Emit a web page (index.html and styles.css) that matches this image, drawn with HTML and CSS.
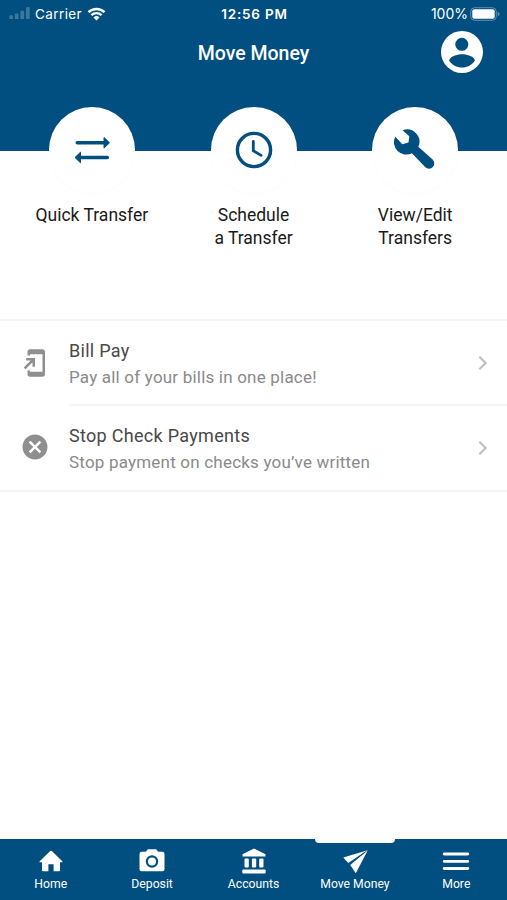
FILE: index.html
```html
<!DOCTYPE html>
<html lang="en">
<head>
    <meta charset="UTF-8">
    <meta name="viewport" content="width=device-width, initial-scale=1.0">
    <title>Move Money</title>

    <link rel="stylesheet" href="styles.css">
</head>
<body>
    <header class="header">
        <div class="status-bar">
            <div class="status-left">
                <svg class="signal" viewBox="0 0 22 14">
                    <rect x="0" y="9" width="4" height="4" rx="1"/>
                    <rect x="6" y="7" width="4" height="6" rx="1"/>
                    <rect x="12" y="4" width="4" height="9" rx="1"/>
                    <rect x="18" y="0" width="4" height="13" rx="1"/>
                </svg>
                <span class="carrier">Carrier</span>
                <svg class="wifi" viewBox="0 0 18 14">
                    <path d="M1 5.2a11.5 11.5 0 0 1 16 0M3.9 8.2a7.3 7.3 0 0 1 10.2 0" fill="none" stroke="#fff" stroke-width="2.4"/>
                    <path d="M9 13.6l-3-3.1a4.4 4.4 0 0 1 6 0z" fill="#fff"/>
                </svg>
            </div>
            <div class="status-time">12:56 PM</div>
            <div class="status-right">
                <span class="percent">100%</span>
                <svg class="battery" viewBox="0 0 30 14">
                    <rect x="0.7" y="0.7" width="25.6" height="12.6" rx="4" fill="none" stroke="#5f90ae" stroke-width="1"/>
                    <rect x="2.3" y="2.3" width="22.4" height="9.4" rx="2" fill="#fff"/>
                    <path d="M27.7 4.8q2 .8 2 2.2t-2 2.2z" fill="#5f90ae"/>
                </svg>
            </div>
        </div>
        <div class="title-bar">
            <h1 class="title">Move Money</h1>
            <svg class="profile" viewBox="0 0 42 42">
                <circle cx="21" cy="21" r="21" fill="#fff"/>
                <circle cx="20.8" cy="13.3" r="6.5" fill="#004f80"/>
                <path d="M8.2 29.8C8.2 25.5 16 23.3 21 23.3s12.8 2.2 12.8 6.5C31 34 26.3 36.6 21 36.6S11 34 8.2 29.8z" fill="#004f80"/>
            </svg>
        </div>
    </header>

    <!-- Round shortcuts, overlapping the bottom of the header -->
    <section class="actions">
        <div class="action">
            <div class="action-circle">
                <svg class="icon-transfer" viewBox="0 0 36 28">
                    <path d="M3.300 6.800H30M33.300 21.500H7" fill="none" stroke="#004f80" stroke-width="3.6" stroke-linecap="round"/>
                    <path d="M30 1.500v10.600l5.500-5.300zM6.500 16.200v10.600L1 21.500z" fill="#004f80" stroke="#004f80" stroke-width="1" stroke-linejoin="round"/>
                </svg>
            </div>
            <div class="action-label">Quick Transfer</div>
        </div>
        <div class="action">
            <div class="action-circle">
                <svg class="icon-clock" viewBox="0 0 38 38">
                    <circle cx="19" cy="19" r="16.6" fill="none" stroke="#004f80" stroke-width="3.4"/>
                    <path d="M18.300 10.500v9.300l7.800 4.600" fill="none" stroke="#004f80" stroke-width="2.8" stroke-linecap="round"/>
                </svg>
            </div>
            <div class="action-label">Schedule<br>a Transfer</div>
        </div>
        <div class="action">
            <div class="action-circle">
                <svg class="icon-wrench" viewBox="9 9 42 42">
                    <path d="M17.500 10.300A12.300 12.300 0 0 1 33.300 26.800L47.600 39.600A5.200 5.200 0 0 1 40.400 47.300L26.900 33.200A12.300 12.300 0 0 1 10.300 16.700L17.300 24.300 23.500 22.500 24.300 16.200z" fill="#004f80"/>
                </svg>
            </div>
            <div class="action-label">View/Edit<br>Transfers</div>
        </div>
    </section>

    <ul class="list">
        <li class="item">
            <svg class="item-icon" viewBox="0 0 24 24">
                <path d="M18 1.01L8 1c-1.1 0-2 .9-2 2v3h2V5h10v14H8v-1H6v3c0 1.1.9 2 2 2h10c1.1 0 2-.9 2-2V3c0-1.1-.9-1.99-2-1.99zM10 15h2V8H5v2h3.59L3 15.59 4.41 17 10 11.41V15z" fill="#8f8f8f"/>
            </svg>
            <div class="item-body">
                <div class="item-text">
                    <div class="item-title">Bill Pay</div>
                    <div class="item-sub">Pay all of your bills in one place!</div>
                </div>
                <svg class="chevron" viewBox="0 0 10 16"><path d="M1.3 1.8L7.7 8l-6.4 6.2"/></svg>
            </div>
        </li>
        <li class="item">
            <svg class="item-icon" viewBox="0 0 24 24">
                <path d="M12 2C6.47 2 2 6.47 2 12s4.47 10 10 10 10-4.47 10-10S17.53 2 12 2zm5 13.59L15.59 17 12 13.41 8.41 17 7 15.59 10.59 12 7 8.41 8.41 7 12 10.59 15.59 7 17 8.41 13.41 12 17 15.59z" fill="#8f8f8f"/>
            </svg>
            <div class="item-body">
                <div class="item-text">
                    <div class="item-title">Stop Check Payments</div>
                    <div class="item-sub">Stop payment on checks you’ve written</div>
                </div>
                <svg class="chevron" viewBox="0 0 10 16"><path d="M1.3 1.8L7.7 8l-6.4 6.2"/></svg>
            </div>
        </li>
    </ul>

    <nav class="tabs">
        <a class="tab">
            <svg class="tab-icon" viewBox="0 0 28 28">
                <path d="M11.4 24.3v-7h5.2v7h5.6q.8 0 .8-.8v-8.2h2.2q.7-.4.1-1L14.8 4q-.8-.6-1.6 0L2.7 14.300q-.6.6.1 1H5v8.200q0 .8.8.8z"/>
            </svg>
            <span>Home</span>
        </a>
        <a class="tab">
            <svg class="tab-icon" viewBox="0 0 28 28">
                <path fill-rule="evenodd" d="M9.800 2.200h8.400l2 2.600h4.300q2 0 2 2v15.400q0 2-2 2h-21q-2 0-2-2V6.800q0-2 2-2h4.300zM14 8.300a6.200 6.200 0 1 0 0 12.400 6.200 6.200 0 0 0 0-12.400z"/>
                <circle cx="14" cy="14.500" r="4"/>
            </svg>
            <span>Deposit</span>
        </a>
        <a class="tab">
            <svg class="tab-icon" viewBox="0 0 28 28">
                <path d="M14 1.500L25.500 7.300V9.500h-23V7.300z"/>
                <rect x="4.500" y="11.500" width="4.300" height="9" rx="1"/>
                <rect x="11.900" y="11.500" width="4.300" height="9" rx="1"/>
                <rect x="19.200" y="11.500" width="4.300" height="9" rx="1"/>
                <rect x="2.300" y="22.600" width="23.400" height="3.800" rx="1"/>
            </svg>
            <span>Accounts</span>
        </a>
        <a class="tab active">
            <svg class="tab-icon" viewBox="0 0 28 28">
                <path d="M26.500 3.300L2.300 10.400 7.200 15.900z"/>
                <path d="M26.800 3.300L9.200 17.900 14.800 26.300z"/>
                <path class="fold" d="M24.500 4.800L8 16.800"/>
            </svg>
            <span>Move Money</span>
        </a>
        <a class="tab">
            <svg class="tab-icon" viewBox="0 0 28 28">
                <path d="M2.200 7h23.600M2.200 14.300h23.600M2.200 21.500h23.600" fill="none" stroke="#fff" stroke-width="2.800" stroke-linecap="round"/>
            </svg>
            <span>More</span>
        </a>
    </nav>
</body>
</html>
```

FILE: styles.css
```css
* {
    box-sizing: border-box;
}
body {
    margin: 0;
    height: 900px;
    display: flex;
    flex-direction: column;
    overflow: hidden;
    font-family: Roboto, sans-serif;
    background-color: #fff;
}
svg {
    display: block;
    flex: none;
}

/* Header */
.header {
    height: 151px;
    flex: none;
    background-color: #004f80;
    color: #fff;
}
.status-bar {
    display: grid;
    grid-template-columns: 1fr auto 1fr;
    align-items: center;
    height: 27px;
    padding: 0 7px 0 9px;
    font-family: Inter, sans-serif;
    font-size: 13.500px;
}
.status-left,
.status-right {
    display: flex;
    align-items: center;
}
.status-right {
    justify-content: flex-end;
    gap: 2px;
}
.signal {
    width: 21px;
    height: 13px;
    fill: #3c789d;
}
.carrier {
    margin: 0 5px;
    letter-spacing: 0.4px;
}
.percent {
    font-size: 14px;
}
.wifi {
    width: 19px;
    height: 14px;
}
.battery {
    width: 30px;
    height: 14px;
}
.status-time {
    font-weight: 600;
    letter-spacing: 0.8px;
}
.title-bar {
    display: grid;
    grid-template-columns: 1fr auto 1fr;
    align-items: center;
    height: 50px;
    padding: 0 24px;
}
.title {
    grid-column: 2;
    margin: 2px 0 0;
    font-size: 19.500px;
    font-weight: 500;
}
.profile {
    justify-self: end;
    width: 42px;
    height: 42px;
}

/* Shortcuts */
.actions {
    display: flex;
    flex: none;
    height: 212px;
    margin-top: -44px;
    padding: 0 11px;
}
.action {
    flex: 1;
    text-align: center;
}
.action-circle {
    display: flex;
    align-items: center;
    justify-content: center;
    width: 86px;
    height: 86px;
    margin: 0 auto 11px;
    border-radius: 50%;
    background-color: #fff;
    box-shadow: 0 1px 4px rgba(0, 0, 0, 0.02);
}
.action-label {
    font-size: 17.500px;
    line-height: 22.500px;
    color: #1a1a1a;
}
.icon-transfer {
    width: 36px;
    height: 28px;
}
.icon-clock {
    width: 38px;
    height: 38px;
}
.icon-wrench {
    width: 42px;
    height: 42px;
}

/* List */
.list {
    flex: 1;
    margin: 0;
    padding: 0;
    list-style: none;
    border-top: 2px solid #f4f4f4;
}
.item {
    display: flex;
    align-items: center;
    height: 85px;
    padding-left: 20px;
}
.item:last-child {
    height: 86px;
    border-bottom: 2px solid #f6f6f6;
}
.item-icon {
    width: 30px;
    height: 30px;
    margin: 0 19px 2px 0;
}
.item-body {
    display: flex;
    flex: 1;
    align-items: center;
    justify-content: space-between;
    height: 85px;
    padding-right: 19px;
    border-bottom: 2px solid #f6f6f6;
}
.item:last-child .item-body {
    border-bottom: none;
}
.item-text {
    padding-top: 2px;
}
.item-title {
    font-size: 18px;
    line-height: 26px;
    letter-spacing: 0.3px;
    color: #484848;
}
.item-sub {
    font-size: 17px;
    line-height: 26px;
    letter-spacing: 0.2px;
    color: #8a8a8a;
}
.chevron {
    width: 10px;
    height: 16px;
    fill: none;
    stroke: #bdbdbd;
    stroke-width: 2;
}

/* Bottom tabs */
.tabs {
    display: flex;
    flex: none;
    height: 61px;
    background-color: #004f80;
}
.tab {
    position: relative;
    display: flex;
    flex: 1;
    flex-direction: column;
    align-items: center;
    padding-top: 8px;
    font-size: 12.200px;
    line-height: 19px;
    color: #fff;
}
.tab-icon {
    width: 28px;
    height: 28px;
    fill: #fff;
}
.fold {
    stroke: #004f80;
    stroke-width: 1;
}
.active::before {
    content: "";
    position: absolute;
    top: 0;
    width: 80px;
    height: 4px;
    border-radius: 0 0 4px 4px;
    background-color: #fff;
}
```
